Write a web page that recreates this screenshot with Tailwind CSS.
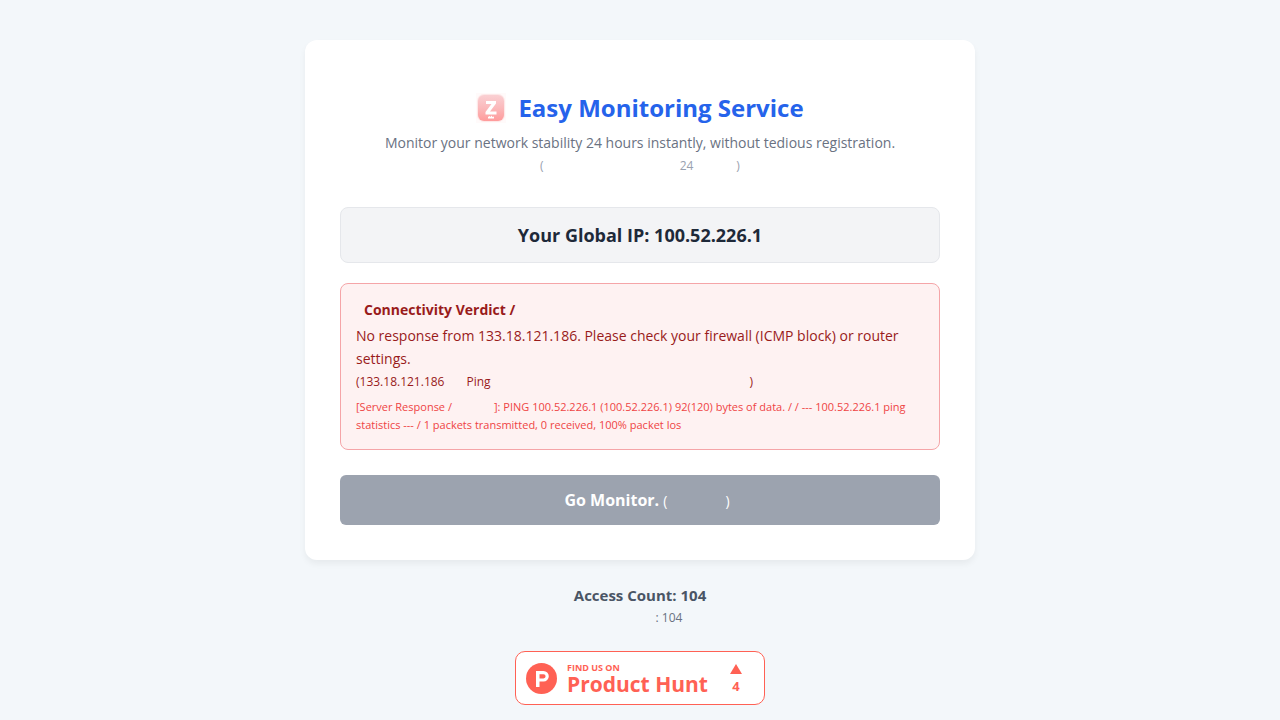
<!DOCTYPE html>
<html lang="en">
<head>
  <meta charset="UTF-8" />
  <meta name="viewport" content="width=device-width, initial-scale=1" />
  <title>Easy Monitoring Service</title>
  <script src="https://cdn.jsdelivr.net/npm/@tailwindcss/browser@4"></script>
</head>
<body class="min-h-screen bg-[#f3f7fa] px-5 pt-10 font-['Open_Sans',sans-serif]">

  <!-- Main card -->
  <main class="mx-auto w-full max-w-[670px] rounded-xl bg-white p-[35px] shadow-[0_4px_6px_rgba(0,0,0,0.05)]">
    <header class="pt-3 text-center">
      <h1 class="flex items-center justify-center gap-3 text-2xl leading-[42px] font-bold text-[#2563eb]">
        <svg class="h-[30px] w-[30px]" viewBox="0 0 30 30" aria-hidden="true">
          <defs>
            <linearGradient id="logo-fill" x1="0" y1="0" x2="0" y2="1">
              <stop offset="0" stop-color="#fad0d3" />
              <stop offset="0.5" stop-color="#fbb9bb" />
              <stop offset="1" stop-color="#ff9b9b" />
            </linearGradient>
          </defs>
          <rect width="30" height="30" fill="#fffafa" />
          <rect x="1" y="1" width="28" height="28" rx="7" fill="#fde8e8" />
          <rect x="2" y="2" width="26" height="26" rx="6" fill="url(#logo-fill)" />
          <path d="M10 8h10v2.500l-6 8h6.500v3H9.500V19l6-8H10z" fill="#fff" />
          <path d="M12 25.500v-1.500l1.500-1 1 1 1-1.500 1 1.500 1.500-.5v2z" fill="#fff" />
        </svg>
        Easy Monitoring Service
      </h1>
      <p class="text-sm leading-7 text-gray-500">Monitor your network stability 24 hours instantly, without tedious registration.</p>
      <p class="text-xs leading-[18px] text-gray-400">(<span class="inline-block w-[136px]"></span>24<span class="inline-block w-[43px]"></span>)</p>
    </header>

    <section class="mt-8 rounded-lg border border-gray-200 bg-gray-100 py-3 text-center text-lg leading-[30px] font-bold text-gray-800">
      Your Global IP: 100.52.226.1
    </section>

    <!-- Verdict -->
    <section class="mt-5 rounded-lg border border-[#f5a5a8] bg-[#fef2f2] px-[15px] pt-[14px] pb-[15px] text-sm leading-[23px] text-[#991b1b]">
      <h2 class="mb-[3px] pl-2 font-bold">Connectivity Verdict /</h2>
      <p>No response from 133.18.121.186. Please check your firewall (ICMP block) or router settings.</p>
      <p class="text-xs leading-6">(133.18.121.186<span class="inline-block w-[22px]"></span>Ping<span class="inline-block w-[259px]"></span>)</p>
      <p class="mt-1 text-[11px] leading-[18px] text-[#ef4444]">[Server Response /<span class="inline-block w-[42px]"></span>]: PING 100.52.226.1 (100.52.226.1) 92(120) bytes of data. / / --- 100.52.226.1 ping statistics --- / 1 packets transmitted, 0 received, 100% packet los</p>
    </section>

    <button type="button" class="mt-[25px] block h-[50px] w-full rounded-md bg-[#9ca3af] pl-[14px] text-base font-bold text-white">
      Go Monitor. <span class="text-sm font-normal">(<span class="inline-block w-[58px]"></span>)</span>
    </button>
  </main>

  <!-- Counter -->
  <footer class="mt-6 flex flex-col items-center text-center">
    <p class="text-[15px] leading-[22px] font-bold text-gray-600">Access Count: 104</p>
    <p class="text-xs leading-6 text-gray-500"><span class="inline-block w-[58px]"></span>: 104</p>

    <a href="#" aria-label="Find us on Product Hunt" class="mt-[21px] mb-[15px] flex h-[54px] w-[250px] items-center rounded-[10px] border border-[#ff6154] bg-white px-[10px] text-[#ff6154]">
      <svg class="h-[31px] w-[31px]" viewBox="0 0 31 31" aria-hidden="true">
        <circle cx="15.500" cy="15.500" r="15.500" fill="#ff6154" />
        <path fill="#fff" fill-rule="evenodd" d="M10 8h7.500a5.300 5.300 0 0 1 0 10.600H13.500V24H10zM13.500 11.200v4.200h4a2.100 2.100 0 0 0 0-4.200z" />
      </svg>
      <span class="ml-[10px] flex flex-col text-left font-bold">
        <span class="text-[9px] leading-3">FIND US ON</span>
        <span class="text-[21px] leading-5">Product Hunt</span>
      </span>
      <span class="mr-3 ml-auto flex flex-col items-center pt-px text-[13px] leading-4 font-bold">
        <svg class="mb-1 h-[10px] w-3" viewBox="0 0 12 10" aria-hidden="true"><path d="M6 0l6 10H0z" fill="#ff6154" /></svg>
        4
      </span>
    </a>
  </footer>

</body>
</html>
